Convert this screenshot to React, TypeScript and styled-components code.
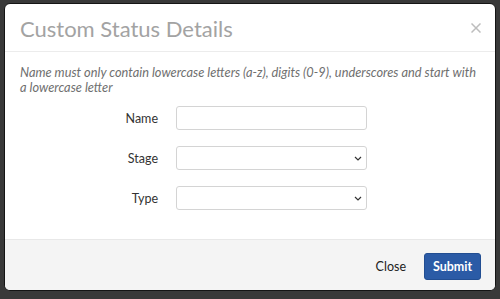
import React from "react";
import styled, { createGlobalStyle } from "styled-components";

const GlobalStyle = createGlobalStyle`
    html, body {
        margin: 0;
        padding: 0;
        background: #393939;
    }
    body {
        padding: 3px 4px;
        font-family: Lato, "Open Sans", sans-serif;
        color: #333;
    }
`;

const Modal = styled.div`
    width: 492px;
    height: 288px;
    box-sizing: border-box;
    border: 1px solid #141414;
    border-radius: 6px;
    background: #fff;
    overflow: hidden;
    display: flex;
    flex-direction: column;
`;

const Header = styled.div`
    height: 47px;
    display: flex;
    align-items: center;
    justify-content: space-between;
    padding: 0 14px 0 15px;
    border-bottom: 1px solid #ececec;
`;

const Title = styled.h4`
    margin: 0;
    font-size: 22px;
    font-weight: 400;
    color: #a3a3a3;
    padding-top: 2px;
`;

const CloseX = styled.button`
    border: none;
    background: none;
    padding: 0;
    width: 10px;
    height: 10px;
    cursor: pointer;
    display: flex;
`;

const Body = styled.div`
    flex: 1;
    padding: 13px 15px 0;
`;

const Help = styled.p`
    margin: 0 0 11px;
    max-width: 456px;
    font-size: 12.8px;
    line-height: 15px;
    font-style: italic;
    color: #6f6f6f;
`;

const Row = styled.div`
    display: grid;
    grid-template-columns: 138px 191px;
    column-gap: 18px;
    align-items: center;
    margin-bottom: 16px;
`;

const Label = styled.label`
    text-align: right;
    font-size: 12.5px;
    color: #333;
`;

const Field = styled.div`
    position: relative;
    height: 24px;
`;

const Input = styled.input`
    box-sizing: border-box;
    width: 100%;
    height: 24px;
    border: 1px solid #d4d4d4;
    border-radius: 3px;
    background: #fff;
    outline: none;
`;

const Select = styled.select`
    box-sizing: border-box;
    width: 100%;
    height: 24px;
    border: 1px solid #d4d4d4;
    border-radius: 3px;
    background: #fff;
    appearance: none;
    outline: none;
`;

const Chevron = styled.svg`
    position: absolute;
    right: 5px;
    top: 10px;
    pointer-events: none;
`;

const Footer = styled.div`
    height: 50px;
    border-top: 1px solid #e8e8e8;
    background: #f4f4f4;
    display: flex;
    align-items: center;
    justify-content: flex-end;
    gap: 18px;
    padding: 0 14px 0 15px;
`;

const LinkButton = styled.button`
    border: none;
    background: none;
    padding: 0;
    font-family: inherit;
    font-size: 12.5px;
    color: #222;
    margin-top: 3px;
`;

const PrimaryButton = styled.button`
    width: 57px;
    height: 27px;
    margin-top: 3px;
    border: 1px solid #224e92;
    border-radius: 3px;
    background: #2b5ba6;
    color: #fff;
    font-family: inherit;
    font-weight: 700;
    font-size: 12.5px;
`;

const SelectField: React.FC<{ id: string }> = ({ id }) => (
    <Field>
        <Select id={id} defaultValue="">
            <option value=""></option>
        </Select>
        <Chevron width="8" height="5" viewBox="0 0 8 5">
            <path d="M1 1l3 3 3-3" fill="none" stroke="#333" strokeWidth="1.2" />
        </Chevron>
    </Field>
);

const App: React.FC = () => {
    return (
        <>
            <GlobalStyle />
            <Modal>
                <Header>
                    <Title>Custom Status Details</Title>
                    <CloseX aria-label="Close">
                        <svg width="10" height="10" viewBox="0 0 10 10">
                            <path d="M0.5 0.5l9 9M9.5 0.5l-9 9" stroke="#bdbdbd" strokeWidth="1.5" />
                        </svg>
                    </CloseX>
                </Header>
                <Body>
                    <Help>
                        Name must only contain lowercase letters (a-z), digits (0-9), underscores and start with
                        a lowercase letter
                    </Help>
                    <Row>
                        <Label htmlFor="name">Name</Label>
                        <Field>
                            <Input id="name" />
                        </Field>
                    </Row>
                    <Row>
                        <Label htmlFor="stage">Stage</Label>
                        <SelectField id="stage" />
                    </Row>
                    <Row>
                        <Label htmlFor="type">Type</Label>
                        <SelectField id="type" />
                    </Row>
                </Body>
                <Footer>
                    <LinkButton>Close</LinkButton>
                    <PrimaryButton>Submit</PrimaryButton>
                </Footer>
            </Modal>
        </>
    );
};

export default App;
